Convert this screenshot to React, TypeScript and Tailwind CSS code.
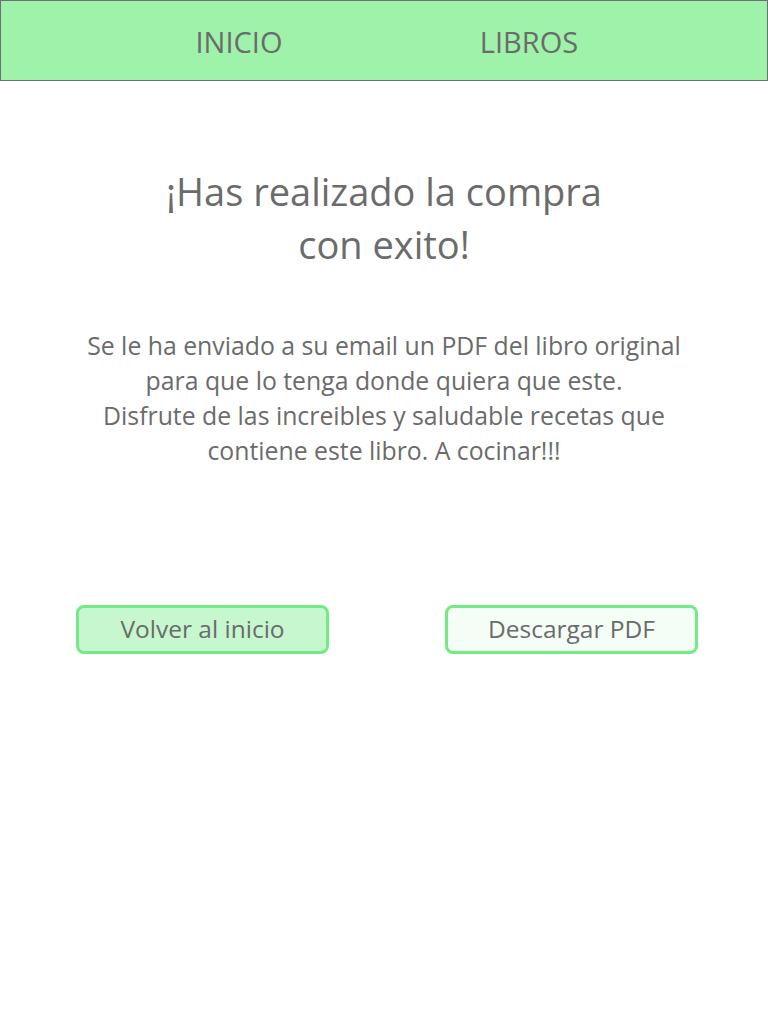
import React from "react";

export default function App() {
  const font = { fontFamily: '"Open Sans", "Noto Sans", sans-serif' };
  return (
    <div className="min-h-[1024px] w-[768px] bg-white text-[#6b6b6b]" style={font}>
      <header className="flex h-[81px] items-center justify-center gap-[90px] border border-[#707070] bg-[#9ff2aa]">
        <a className="w-[200px] pt-[2px] text-center text-[29px] leading-none">INICIO</a>
        <a className="w-[200px] pt-[2px] text-center text-[29px] leading-none">LIBROS</a>
      </header>
      <h1 className="mt-[84px] text-center text-[38px] leading-[53px]">
        ¡Has realizado la compra
        <br />
        con exito!
      </h1>
      <p className="mt-[57px] text-center text-[24.8px] leading-[35px]">
        Se le ha enviado a su email un PDF del libro original
        <br />
        para que lo tenga donde quiera que este.
        <br />
        Disfrute de las increibles y saludable recetas que
        <br />
        contiene este libro. A cocinar!!!
      </p>
      <div className="mt-[137px] flex gap-[116px] pl-[76px]">
        <button className="h-[49px] w-[253px] rounded-[8px] border-[3px] border-[#74ea85] bg-[#c6f7cf] pb-[1px] text-[24.5px] text-[#6b6b6b]">
          Volver al inicio
        </button>
        <button className="h-[49px] w-[253px] rounded-[8px] border-[3px] border-[#74ea85] bg-[#f4fdf6] pb-[1px] text-[24.5px] text-[#6b6b6b]">
          Descargar PDF
        </button>
      </div>
    </div>
  );
}
